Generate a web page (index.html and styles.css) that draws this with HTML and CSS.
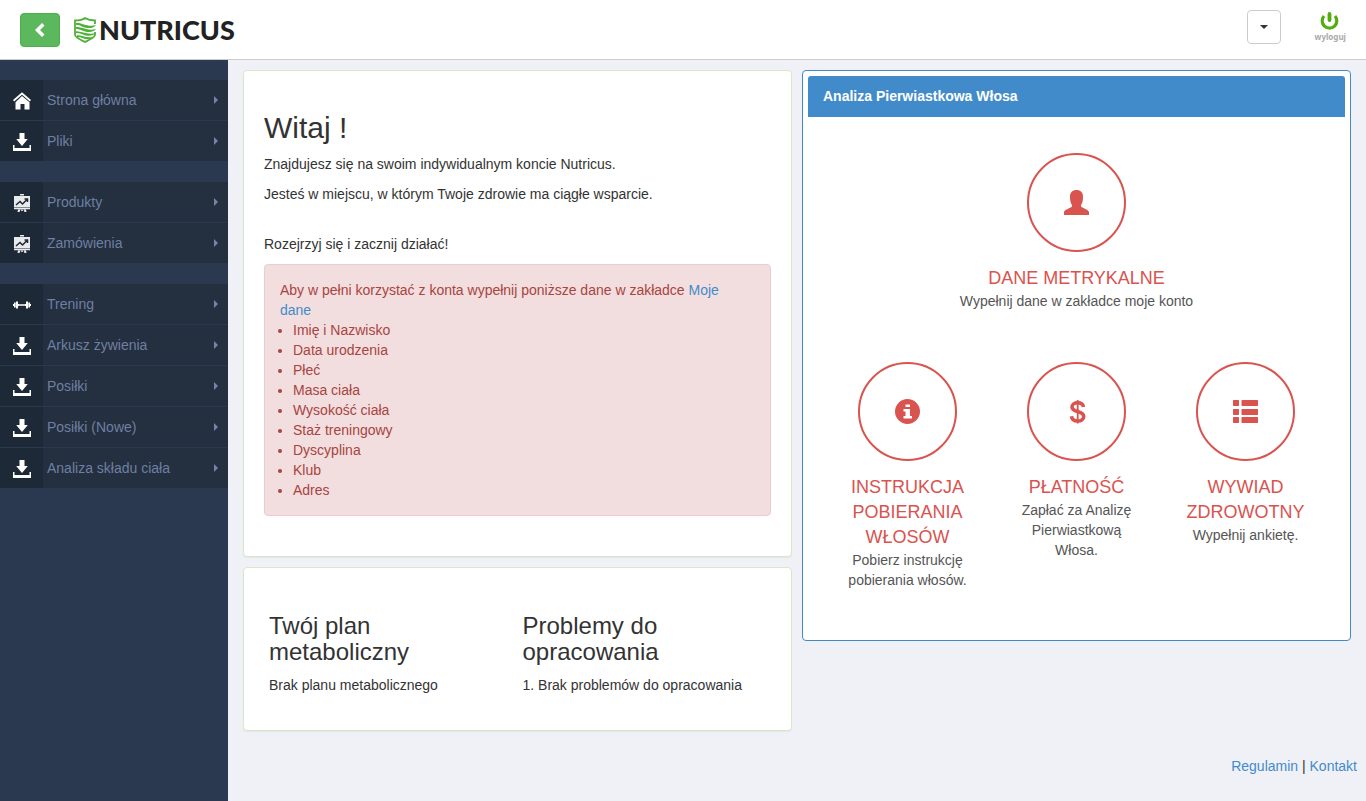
FILE: index.html
```html
<!DOCTYPE html>
<html lang="pl">
<head>
<meta charset="utf-8">
<meta name="viewport" content="width=device-width, initial-scale=1">
<title>Nutricus</title>
<link rel="stylesheet" href="styles.css">
</head>
<body>
<svg class="sprite" aria-hidden="true">
  <symbol id="download" viewBox="0 0 18 18"><path d="M6.500 0h5v6h3.300L9 13 3.200 6h3.300z"/><path d="M0 12h1.500v3h15v-3H18v6H0z"/></symbol>
  <symbol id="board" viewBox="0 0 18 18"><path fill="#e8eaec" d="M7 0h4v1.500H7zM1 2h16v11.500H1zM1 14h16v1.200H1zM5 15.500h2.500L6.500 18h-2zM8.200 15.500h1.600V17H8.200zM10.500 15.500H13l.5 2.500h-2z"/><path class="board-line" d="M3 11 7 7.500 9.500 10 14 5.500M11.500 5h3v3"/></symbol>
  <symbol id="house" viewBox="0 0 18 18"><path d="M9 .3 18 8l-1.200 1.500L9 2.800 1.200 9.500 0 8z"/><path d="m9 4 7.500 6.300V17.500h-5V12h-4v5.500h-5V10.300z"/></symbol>
  <symbol id="dumbbell" viewBox="0 0 18 18"><path d="M6 8.200h6v1.600H6zM0 8h1V6.500h1.700v5H1V10H0zM3 5.500h2V8h1v2H5v2.500H3zM18 8h-1V6.500h-1.700v5H17V10h1zM15 5.500h-2V8h-1v2h1v2.500h2z"/></symbol>
</svg>

<header class="topbar">
  <button class="back" type="button" aria-label="Zwiń menu"><svg width="12" height="14" viewBox="0 0 12 14"><path d="M8 0 10.500 2.500 6 7l4.500 4.500L8 14 1 7z"/></svg></button>
  <a class="logo" href="#">
    <svg width="23" height="26" viewBox="0 0 23 26" fill="none" stroke="#4fb037">
      <path stroke-width="1.800" d="M21 7V3.500Q15 3.500 11 1 8 3.500 1 3.500V18c1 3 6 5 10 7 4-2 9-4 10-7v-3"/>
      <path fill="#4fb037" stroke="none" d="M2 6c6-1 11 4.500 20 2-3 4-9 3.500-13 2C6 8.700 4 7.800 2 7.800zM2 10c6-.5 11 4.300 20 2-3 4-9 3.300-13 1.700-3-1.200-5-1.700-7-1.700zM2 14.200c6-.3 11 4 19.500 1.800-3 3.800-9 3-12.500 1.500-3-1.100-5-1.500-7-1.500zM3 18.300c5-.2 9 3 16 1.700-3 3-7 2.300-10 1.200-2-.8-4-1.200-6-1.200z"/>
    </svg>
    <span>NUTRICUS</span>
  </a>
  <div class="account">
    <button class="dropdown" type="button" aria-label="Konto"><span class="caret"></span></button>
    <a class="logout" href="#">
      <svg width="20" height="20" viewBox="0 0 20 20" fill="none" stroke="#54ad0c"><path stroke-width="3.200" d="M4 5a7.300 7.300 0 1 0 11 0"/><path stroke-width="3.800" stroke-linecap="round" d="M9.500 3v6"/></svg>
      <span>wyloguj</span>
    </a>
  </div>
</header>

<div class="layout">
  <nav class="sidebar">
    <ul class="menu">
      <li><a href="#"><span class="cell"><svg><use href="#house"/></svg></span>Strona główna</a></li>
      <li><a href="#"><span class="cell"><svg><use href="#download"/></svg></span>Pliki</a></li>
    </ul>
    <ul class="menu">
      <li><a href="#"><span class="cell"><svg><use href="#board"/></svg></span>Produkty</a></li>
      <li><a href="#"><span class="cell"><svg><use href="#board"/></svg></span>Zamówienia</a></li>
    </ul>
    <ul class="menu">
      <li><a href="#"><span class="cell"><svg><use href="#dumbbell"/></svg></span>Trening</a></li>
      <li><a href="#"><span class="cell"><svg><use href="#download"/></svg></span>Arkusz żywienia</a></li>
      <li><a href="#"><span class="cell"><svg><use href="#download"/></svg></span>Posiłki</a></li>
      <li><a href="#"><span class="cell"><svg><use href="#download"/></svg></span>Posiłki (Nowe)</a></li>
      <li><a href="#"><span class="cell"><svg><use href="#download"/></svg></span>Analiza składu ciała</a></li>
    </ul>
  </nav>

  <div class="content">
    <main class="columns">
      <div class="stack">
        <section class="card">
          <h2>Witaj !</h2>
          <p>Znajdujesz się na swoim indywidualnym koncie Nutricus.</p>
          <p>Jesteś w miejscu, w którym Twoje zdrowie ma ciągłe wsparcie.</p>
          <p class="start">Rozejrzyj się i zacznij działać!</p>
          <div class="alert">
            Aby w pełni korzystać z konta wypełnij poniższe dane w zakładce <a href="#">Moje dane</a>
            <ul>
              <li>Imię i Nazwisko</li>
              <li>Data urodzenia</li>
              <li>Płeć</li>
              <li>Masa ciała</li>
              <li>Wysokość ciała</li>
              <li>Staż treningowy</li>
              <li>Dyscyplina</li>
              <li>Klub</li>
              <li>Adres</li>
            </ul>
          </div>
        </section>
        <section class="card plans">
          <div class="plan">
            <h3>Twój plan metaboliczny</h3>
            <p>Brak planu metabolicznego</p>
          </div>
          <div class="plan">
            <h3>Problemy do opracowania</h3>
            <p>1. Brak problemów do opracowania</p>
          </div>
        </section>
      </div>

      <section class="analysis">
        <h3 class="analysis-title">Analiza Pierwiastkowa Włosa</h3>
        <div class="steps">
          <a class="step wide" href="#">
            <span class="circle"><svg width="25" height="25" viewBox="0 0 25 25"><path d="M12.500 0C16.500 0 19 2.500 19 6.500c0 4-.5 6.500-2 8.500v1.500c2 2 8 3 8 6V25H0v-2.500c0-3 6-4 8-6V15c-1.500-2-2-4.500-2-8.500C6 2.500 8.500 0 12.500 0z"/></svg></span>
            <span class="step-title">Dane metrykalne</span>
            <span class="step-text">Wypełnij dane w zakładce moje konto</span>
          </a>
          <a class="step" href="#">
            <span class="circle"><svg width="25" height="25" viewBox="0 0 25 25"><path fill-rule="evenodd" d="M12.500 0a12.500 12.500 0 1 1 0 25 12.500 12.500 0 0 1 0-25zM10.500 5.500h4.500v2.500h-4.500zM8.500 10h6.500v7h2v2.500H8.500V17h2v-4.500h-2z"/></svg></span>
            <span class="step-title">Instrukcja pobierania włosów</span>
            <span class="step-text">Pobierz instrukcję pobierania włosów.</span>
          </a>
          <a class="step" href="#">
            <span class="circle"><svg width="25" height="25" viewBox="0 0 25 25" fill="none" stroke="currentColor"><path stroke-width="3.600" d="M19.500 8C19 5 17 3.800 13.800 3.800 10.500 3.800 8 5.300 8 8c0 6 11.700 3 11.700 9.400 0 3-2.600 4.600-5.900 4.600-4 0-6-1.800-6.300-4.800"/><path stroke-width="1.800" d="M13.700 1v23.500"/></svg></span>
            <span class="step-title">Płatność</span>
            <span class="step-text">Zapłać za Analizę Pierwiastkową Włosa.</span>
          </a>
          <a class="step" href="#">
            <span class="circle"><svg width="25" height="25" viewBox="0 0 25 25"><path d="M.5 1h5l.5.500v5l-.5.500h-5L0 6.500v-5zM9 1h15.500l.5.500v5l-.5.500H9l-.5-.5v-5zM.5 10h5l.5.500v5l-.5.500h-5l-.5-.5v-5zM9 10h15.500l.5.500v5l-.5.500H9l-.5-.5v-5zM.5 18h5l.5.500v5l-.5.500h-5l-.5-.5v-5zM9 18h15.500l.5.500v5l-.5.500H9l-.5-.5v-5z"/></svg></span>
            <span class="step-title">Wywiad zdrowotny</span>
            <span class="step-text">Wypełnij ankietę.</span>
          </a>
        </div>
      </section>
    </main>
    <footer class="footer"><a href="#">Regulamin</a> | <a href="#">Kontakt</a></footer>
  </div>
</div>
</body>
</html>
```

FILE: styles.css
```css
* { box-sizing: border-box; }
body {
  margin: 0;
  min-height: 100vh;
  display: flex;
  flex-direction: column;
  background: #f0f1f7;
  color: #333;
  font: 14px/20px "Liberation Sans", Arial, sans-serif;
}
a { color: #428bca; text-decoration: none; }
h2, h3, p { margin: 0; font-weight: 400; }
ul { margin: 0; padding: 0; }
button { padding: 0; cursor: pointer; }
.sprite { position: absolute; width: 0; height: 0; }

.topbar {
  display: flex;
  align-items: center;
  height: 60px;
  padding: 0 20px;
  background: #fff;
  border-bottom: 1px solid #ccc;
}
.back {
  display: grid;
  place-items: center;
  width: 40px;
  height: 34px;
  background: #5cb85c;
  border: 1px solid #4cae4c;
  border-radius: 4px;
  fill: #fff;
}
.logo {
  display: flex;
  align-items: center;
  gap: 2px;
  margin-left: 14px;
  color: #222;
  font: 900 27px/34px Lato, sans-serif;
}
.account {
  display: flex;
  align-items: center;
  gap: 34px;
  margin-left: auto;
  padding-bottom: 6px;
}
.dropdown {
  display: grid;
  place-items: center;
  width: 34px;
  height: 34px;
  background: #fff;
  border: 1px solid #ccc;
  border-radius: 4px;
}
.caret {
  border: 4px solid transparent;
  border-top-color: #333;
  border-bottom: 0;
}
.logout {
  display: flex;
  flex-direction: column;
  align-items: center;
  color: #aaa;
  font: 700 8px/12px "Noto Sans", sans-serif;
}

.layout { display: flex; flex: 1; }
.sidebar { width: 228px; flex: none; padding-top: 20px; background: #2a3950; }
.menu { list-style: none; margin-bottom: 20px; }
.menu li { border-bottom: 1px solid #2a3950; }
.menu a {
  display: flex;
  align-items: center;
  gap: 4px;
  height: 40px;
  padding-right: 10px;
  background: #242f3f;
  color: #6f7fa3;
}
.menu a::after {
  content: "";
  margin-left: auto;
  border: 4px solid transparent;
  border-left-color: #7483a8;
  border-right: 0;
}
.cell {
  display: grid;
  place-items: center;
  width: 43px;
  height: 40px;
  padding-top: 2px;
  background: #1e2937;
  fill: #fff;
}
.cell svg { width: 18px; height: 18px; }
.board-line { fill: none; stroke: #1e2937; stroke-width: 1.500; }

.content { flex: 1; min-width: 0; padding: 10px 0 0 15px; }
.columns {
  display: grid;
  grid-template-columns: 1fr 1fr;
  align-items: start;
  gap: 10px;
  padding-right: 15px;
}
.stack { display: grid; gap: 10px; }
.card {
  padding: 40px 20px;
  background: #fff;
  border: 1px solid #d6e9c6;
  border-radius: 4px;
  box-shadow: 0 1px 1px rgba(0, 0, 0, .05);
}
.card h2 { margin-bottom: 10px; font-size: 30px; line-height: 33px; }
.card p { margin-bottom: 10px; }
.card .start { margin-top: 30px; }
.alert {
  padding: 15px 35px 15px 15px;
  background: #f2dede;
  border: 1px solid #ebccd1;
  border-radius: 4px;
  color: #a94442;
}
.alert ul { padding-left: 13px; }
.plans { display: grid; grid-template-columns: 1fr 1fr; padding: 45px 20px 25px; }
.plan { padding: 0 5px; }
.plan h3 { margin-bottom: 10px; font-size: 24px; line-height: 26px; }
.plan p { margin-bottom: 10px; }

.analysis {
  padding: 5px;
  background: #fff;
  border: 1px solid #428bca;
  border-radius: 4px;
}
.analysis-title {
  padding: 10px 15px;
  background: #428bca;
  border-bottom: 1px solid #428bca;
  border-radius: 3px 3px 0 0;
  color: #fff;
  font-size: 14px;
  font-weight: 700;
}
.steps {
  display: grid;
  grid-template-columns: repeat(3, 1fr);
  row-gap: 51px;
  padding: 36px 15px 45px;
}
.step {
  display: flex;
  flex-direction: column;
  align-items: center;
  padding: 0 20px;
  color: #555;
  text-align: center;
}
.wide { grid-column: 1 / -1; }
.circle {
  display: grid;
  place-items: center;
  width: 99px;
  height: 99px;
  margin-bottom: 14px;
  border: 2px solid #d9534f;
  border-radius: 50%;
  color: #d9534f;
  fill: currentColor;
}
.step-title {
  color: #d9534f;
  font-size: 18px;
  line-height: 25px;
  text-transform: uppercase;
}
.footer { padding: 25px 9px 25px 0; text-align: right; }
```
